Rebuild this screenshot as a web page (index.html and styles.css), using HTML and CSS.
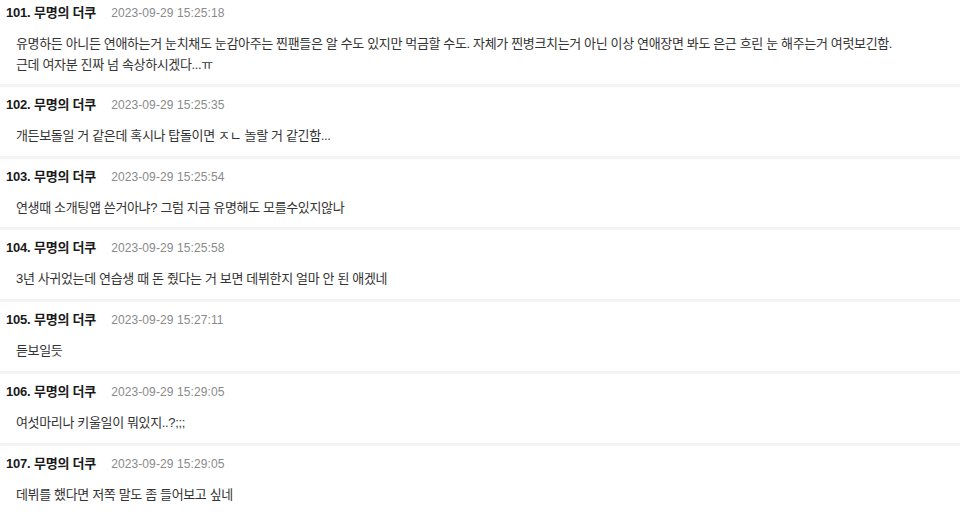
FILE: index.html
```html
<!DOCTYPE html>
<html lang="ko">
<head>
<meta charset="utf-8">
<link rel="stylesheet" href="styles.css">
</head>
<body>
<div class="list">
  <div class="item first">
    <div class="head"><span class="num">101. 무명의 더쿠</span><span class="date">2023-09-29 15:25:18</span></div>
    <div class="body">유명하든 아니든 연애하는거 눈치채도 눈감아주는 찐팬들은 알 수도 있지만 먹금할 수도. 자체가 찐병크치는거 아닌 이상 연애장면 봐도 은근 흐린 눈 해주는거 여럿보긴함.<br>근데 여자분 진짜 넘 속상하시겠다...ㅠ</div>
  </div>
  <div class="item">
    <div class="head"><span class="num">102. 무명의 더쿠</span><span class="date">2023-09-29 15:25:35</span></div>
    <div class="body">개든보돌일 거 같은데 혹시나 탑돌이면 ㅈㄴ 놀랄 거 같긴함...</div>
  </div>
  <div class="item">
    <div class="head"><span class="num">103. 무명의 더쿠</span><span class="date">2023-09-29 15:25:54</span></div>
    <div class="body">연생때 소개팅앱 쓴거아냐? 그럼 지금 유명해도 모를수있지않나</div>
  </div>
  <div class="item">
    <div class="head"><span class="num">104. 무명의 더쿠</span><span class="date">2023-09-29 15:25:58</span></div>
    <div class="body">3년 사귀었는데 연습생 때 돈 줬다는 거 보면 데뷔한지 얼마 안 된 애겠네</div>
  </div>
  <div class="item">
    <div class="head"><span class="num">105. 무명의 더쿠</span><span class="date">2023-09-29 15:27:11</span></div>
    <div class="body">듣보일듯</div>
  </div>
  <div class="item">
    <div class="head"><span class="num">106. 무명의 더쿠</span><span class="date">2023-09-29 15:29:05</span></div>
    <div class="body">여섯마리나 키울일이 뭐있지..?;;;</div>
  </div>
  <div class="item">
    <div class="head"><span class="num">107. 무명의 더쿠</span><span class="date">2023-09-29 15:29:05</span></div>
    <div class="body">데뷔를 했다면 저쪽 말도 좀 들어보고 싶네</div>
  </div>
</div>
</body>
</html>
```

FILE: styles.css
```css
html, body {
  margin: 0;
  padding: 0;
  background: #ffffff;
}
body {
  font-family: "Liberation Sans", "Noto Sans CJK KR", sans-serif;
  color: #222;
  overflow: hidden;
}
.list {
  display: flex;
  flex-direction: column;
}
.item {
  border-top: 3px solid #f3f3f3;
  padding: 8px 0 9.8px 6px;
}
.item.first {
  border-top: none;
  padding-top: 3px;
  padding-bottom: 8.8px;
}
.head {
  display: flex;
  align-items: baseline;
  gap: 15px;
  height: 20px;
  line-height: 20px;
}
.num {
  font-size: 13px;
  font-weight: bold;
  color: #1a1a1a;
  letter-spacing: -0.2px;
}
.date {
  font-size: 12px;
  color: #8a8a8a;
  letter-spacing: 0.1px;
}
.body {
  margin-top: 10px;
  padding-left: 10px;
  font-size: 13px;
  line-height: 21px;
  color: #333;
  letter-spacing: -0.35px;
}
```
